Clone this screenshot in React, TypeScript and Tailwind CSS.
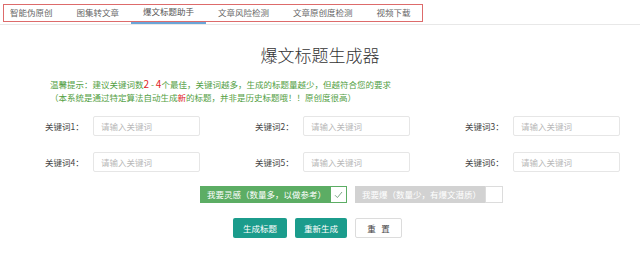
const tabs = ['智能伪原创', '图集转文章', '爆文标题助手', '文章风险检测', '文章原创度检测', '视频下载'];
const font = { fontFamily: '"Noto Sans CJK SC", "Microsoft YaHei", sans-serif' };

function KeywordField({ n }: { n: number }) {
  return (
    <div className="flex w-[210px] shrink-0 items-center">
      <label className="w-[48px] shrink-0 text-[8.5px] text-[#444]">关键词{n}：</label>
      <input
        className="h-[20px] w-[107px] rounded-[2px] border border-[#e6e6e6] bg-white pl-[7px] text-[8.5px] text-[#333] outline-none placeholder:text-[#b8b8b8]"
        placeholder="请输入关键词"
      />
    </div>
  );
}

export default function App() {
  return (
    <div className="h-[258px] w-[640px] overflow-hidden bg-white" style={font}>
      {/* tabs */}
      <div className="relative h-[25px] border-b border-[#e8e8e8]">
        <div className="ml-[-2px] flex h-full">
          {tabs.map((t, i) => (
            <div
              key={t}
              className={
                'flex h-full items-center px-3 text-[8.5px] ' +
                (i === 2 ? 'border-b-2 border-[#6aa5d8] text-[#555]' : 'text-[#666]')
              }
            >
              {t}
            </div>
          ))}
        </div>
        <div className="pointer-events-none absolute left-[3px] top-[4px] h-[18px] w-[420px] border border-[#dd6b6b]" />
      </div>

      <h1 className="mt-[18px] text-center text-[17px] font-light leading-[24px] text-[#333]">爆文标题生成器</h1>

      <div className="ml-[50px] mt-[10px] text-[8.5px] leading-[13px] text-[#52a043]">
        <p>
          温馨提示：建议关键词数<span className="text-[10px] text-[#e02424]">2</span> -{' '}
          <span className="text-[10px] text-[#e02424]">4</span>个最佳，关键词越多，生成的标题量越少，但越符合您的要求
        </p>
        <p>
          （本系统是通过特定算法自动生成<span className="text-[#e02424]">新</span>的标题，并非是历史标题哦！！原创度很高）
        </p>
      </div>

      <div className="ml-[45px] mt-[12px] flex flex-col gap-[16px]">
        <div className="flex">
          <KeywordField n={1} />
          <KeywordField n={2} />
          <KeywordField n={3} />
        </div>
        <div className="flex">
          <KeywordField n={4} />
          <KeywordField n={5} />
          <KeywordField n={6} />
        </div>
      </div>

      <div className="ml-[200px] mt-[14px] flex gap-[8px]">
        <div className="flex h-[17px]">
          <div className="flex w-[130px] items-center bg-[#5cad64] pl-[7px] text-[8.5px] text-white">
            我要灵感（数量多，以做参考）
          </div>
          <div className="flex w-[17px] items-center justify-center border border-[#5cad64] bg-white">
            <svg width="9" height="8" viewBox="0 0 9 8" fill="none">
              <path d="M1 4.2 L3.4 6.6 L8 1" stroke="#7fa88a" strokeWidth="1" />
            </svg>
          </div>
        </div>
        <div className="flex h-[17px]">
          <div className="flex w-[130px] items-center bg-[#d2d2d2] pl-[7px] text-[8.5px] text-white">
            我要爆（数量少，有爆文潜质）
          </div>
          <div className="w-[18px] border border-[#dcdcdc] bg-white" />
        </div>
      </div>

      <div className="ml-[233px] mt-[15px] flex gap-[8px]">
        <button className="h-[20px] w-[54px] rounded-[2px] bg-[#1b9c8c] text-[8.5px] text-white">生成标题</button>
        <button className="h-[20px] w-[52px] rounded-[2px] bg-[#1b9c8c] text-[8.5px] text-white">重新生成</button>
        <button className="h-[20px] w-[47px] rounded-[2px] border border-[#dcdcdc] bg-white text-[8.5px] text-[#444]">
          重&nbsp;&nbsp;&nbsp;置
        </button>
      </div>
    </div>
  );
}
